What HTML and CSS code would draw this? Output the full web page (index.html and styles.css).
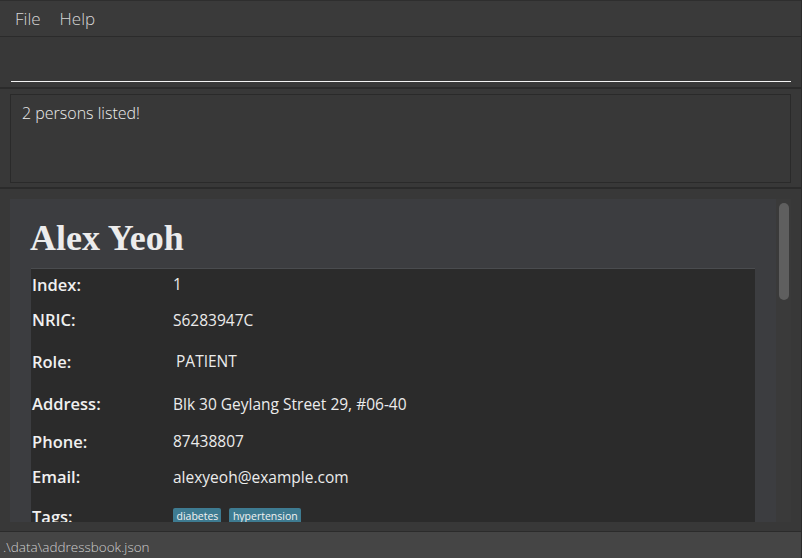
FILE: index.html
```html
<!DOCTYPE html>
<html>
<head>
<meta charset="utf-8">
<link rel="stylesheet" href="styles.css">
</head>
<body>
<div class="app">
  <div class="menubar">
    <span class="menu-item">File</span>
    <span class="menu-item">Help</span>
  </div>
  <div class="command-pane">
    <div class="command-input"></div>
  </div>
  <div class="result-pane">
    <div class="result-box">2 persons listed!</div>
  </div>
  <div class="list-pane">
    <div class="list-view">
      <div class="card">
        <div class="name">Alex Yeoh</div>
        <div class="details">
          <div class="label">Index:</div><div class="value">1</div>
          <div class="label">NRIC:</div><div class="value">S6283947C</div>
          <div class="label">Role:</div><div class="value role">PATIENT</div>
          <div class="label">Address:</div><div class="value">Blk 30 Geylang Street 29, #06-40</div>
          <div class="label">Phone:</div><div class="value">87438807</div>
          <div class="label">Email:</div><div class="value">alexyeoh@example.com</div>
          <div class="label">Tags:</div><div class="value tags"><span class="tag">diabetes</span><span class="tag">hypertension</span></div>
        </div>
      </div>
    </div>
    <div class="scrollbar"><div class="thumb"></div></div>
  </div>
  <div class="statusbar">.\data\addressbook.json</div>
</div>
</body>
</html>
```
FILE: styles.css
```css
html, body {
  margin: 0;
  padding: 0;
}
body {
  background: #383838;
  font-family: "Open Sans", "Noto Sans", sans-serif;
  width: 802px;
  height: 558px;
  overflow: hidden;
}
.app {
  display: flex;
  flex-direction: column;
  width: 801px;
  height: 558px;
  border-right: 1px solid #2b2b2b;
  background: #383838;
}
.menubar {
  height: 35px;
  flex: none;
  border-top: 1px solid #2e2e2e;
  border-bottom: 1px solid #2b2b2b;
  background: #3a3a3a;
  display: flex;
  align-items: center;
  padding-left: 15px;
  gap: 19px;
}
.menu-item {
  color: #d6d6d6;
  font-size: 17px;
  font-weight: 300;
}
.command-pane {
  height: 50px;
  flex: none;
  padding: 0 10px 0 11px;
  display: flex;
  flex-direction: column;
  justify-content: flex-end;
  border-bottom: 2px solid #2b2b2b;
}
.command-input {
  height: 44px;
  border-bottom: 1px solid #f4f4f4;
  margin-bottom: 5px;
}
.result-pane {
  height: 100px;
  flex: none;
  padding: 5px 10px 4px 10px;
  box-sizing: border-box;
  border-bottom: 2px solid #2b2b2b;
}
.result-box {
  height: 89px;
  box-sizing: border-box;
  border: 1px solid #2a2a2a;
  color: #ececec;
  font-size: 16px;
  font-weight: 300;
  padding: 7px 11px 6px;
}
.list-pane {
  flex: 1;
  display: flex;
  padding: 10px 10px 9px 10px;
  border-bottom: 1px solid #2b2b2b;
  min-height: 0;
}
.list-view {
  flex: 1;
  background: #3c3d40;
  overflow: hidden;
}
.card {
  padding: 18px 21px 0 21px;
}
.name {
  font-family: "Liberation Serif", serif;
  font-weight: bold;
  font-size: 36px;
  color: #ececec;
  line-height: 42px;
  height: 51px;
  margin-left: -1px;
}
.details {
  background: #2b2b2b;
  border-top: 1px solid #4a4c4f;
  display: grid;
  grid-template-columns: 141px 1fr;
  grid-template-rows: 30px 41px 42px 43px 32px 39px 40px;
  align-items: center;
  padding-left: 1px;
}
.label {
  color: #f0f0f0;
  font-size: 16.5px;
  font-weight: 600;
}
.value {
  color: #ececec;
  font-size: 15.5px;
}
.role {
  padding-left: 3px;
}
.tags {
  display: flex;
  gap: 8px;
}
.tag {
  background: #3e7b91;
  color: #f2f2f2;
  font-size: 10.5px;
  padding: 0 3px 0 3.5px;
  border-radius: 2px;
  line-height: 16px;
}
.scrollbar {
  width: 15px;
  flex: none;
  background: #3a3a3a;
}
.thumb {
  margin: 4px 2px 0 3px;
  height: 97px;
  background: #5f5f5f;
  border-radius: 5px;
}
.statusbar {
  height: 26px;
  flex: none;
  background: #454545;
  color: #cfcfcf;
  font-size: 13.5px;
  font-weight: 300;
  padding-left: 3px;
  line-height: 30px;
}
```
